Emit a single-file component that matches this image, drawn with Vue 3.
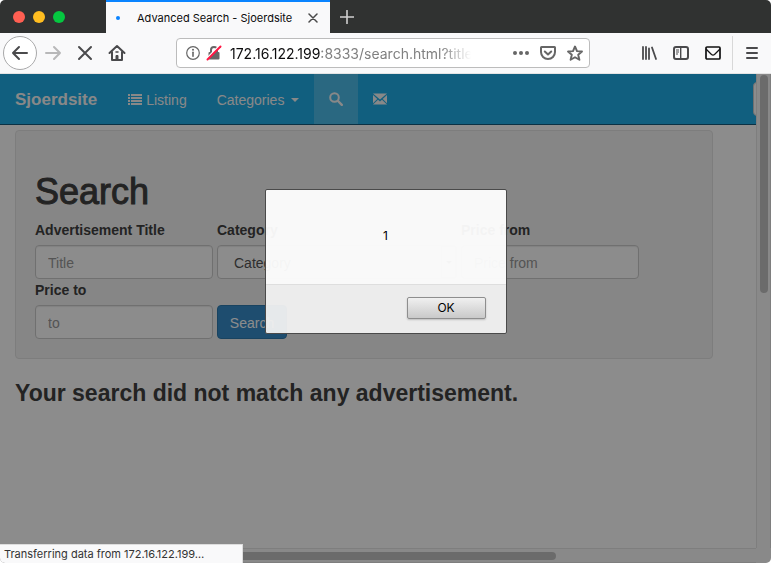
<script setup>
import { ref } from 'vue'

const title = ref('')
const priceFrom = ref('')
const priceTo = ref('')
const query = ref('')
const category = ref('')
const address = '172.16.122.199'
</script>

<template>
  <div class="window">
    <header class="tabbar">
      <div class="lights">
        <button class="light red" aria-label="Close window"></button>
        <button class="light amber" aria-label="Minimise window"></button>
        <button class="light green" aria-label="Zoom window"></button>
      </div>
      <div class="tab">
        <span class="busy"></span>
        <span class="tab-title">Advanced Search - Sjoerdsite</span>
        <button class="plain tab-close" aria-label="Close tab">
          <svg width="10" height="10" viewBox="0 0 10 10"><path d="M1 1l8 8M9 1l-8 8" stroke="#4a4a4a" stroke-width="1.5" stroke-linecap="round" /></svg>
        </button>
      </div>
      <button class="plain new-tab" aria-label="New tab">
        <svg width="14" height="14" viewBox="0 0 14 14"><path d="M7 .5v13M.5 7h13" stroke="#d0d0d0" stroke-width="1.6" stroke-linecap="round" /></svg>
      </button>
    </header>

    <div class="toolbar">
      <button class="plain back" aria-label="Back">
        <svg width="18" height="16" viewBox="0 0 18 16" fill="none" stroke="#4a4a4c" stroke-width="2" stroke-linecap="round" stroke-linejoin="round"><path d="M16 8H2M8 2L2 8l6 6" /></svg>
      </button>
      <button class="plain tool" aria-label="Forward">
        <svg width="18" height="16" viewBox="0 0 18 16" fill="none" stroke="#b8b8b9" stroke-width="2" stroke-linecap="round" stroke-linejoin="round"><path d="M2 8h14M10 2l6 6-6 6" /></svg>
      </button>
      <button class="plain tool" aria-label="Stop">
        <svg width="16" height="16" viewBox="0 0 16 16" fill="none" stroke="#4a4a4c" stroke-width="2" stroke-linecap="round"><path d="M2 2l12 12M14 2L2 14" /></svg>
      </button>
      <button class="plain tool" aria-label="Home">
        <svg width="18" height="18" viewBox="0 0 18 18" fill="none" stroke="#4a4a4c" stroke-width="2" stroke-linecap="round" stroke-linejoin="round"><path d="M1.500 9L9 2l7.500 7M4 8v8h10V8" /><path d="M8 15.500v-4h2v4z" fill="#4a4a4c" stroke-width="1" /><path d="M8 8h2" stroke-width="1.500" /></svg>
      </button>
      <div class="urlbar">
        <button class="plain" aria-label="Site information">
          <svg width="14" height="14" viewBox="0 0 14 14" fill="none" stroke="#666"><circle cx="7" cy="7" r="6.300" stroke-width="1.200" /><path d="M7 6.300v4" stroke-width="1.600" stroke-linecap="round" /><circle cx="7" cy="3.800" r="1" fill="#666" stroke="none" /></svg>
        </button>
        <button class="plain" aria-label="Connection is not secure">
          <svg width="16" height="16" viewBox="0 0 16 16" fill="none"><path d="M5 8V5a3 3 0 0 1 6 0v3" stroke="#666" stroke-width="2" /><rect x="2.500" y="7" width="11" height="7.500" rx="1" fill="#666" /><path d="M1.200 13.500L13.500 1.200" stroke="#fff" stroke-width="2.400" /><path d="M1.500 14.500l13-13" stroke="#ff1744" stroke-width="2" stroke-linecap="round" /></svg>
        </button>
        <div class="address">{{ address }}<span class="path">:8333/search.html?title=</span></div>
        <button class="plain" aria-label="Page actions">
          <svg width="16" height="4" viewBox="0 0 16 4" fill="#666"><circle cx="2" cy="2" r="2" /><circle cx="8" cy="2" r="2" /><circle cx="14" cy="2" r="2" /></svg>
        </button>
        <button class="plain" aria-label="Save to Pocket">
          <svg width="16" height="15" viewBox="0 0 16 15" fill="none" stroke="#666" stroke-width="2" stroke-linecap="round" stroke-linejoin="round"><path d="M1.500 1h13q.5 0 .5.500V6a7 7 0 0 1-14 0V1.500q0-.5.500-.5z" /><path d="M4.800 5.500L8 8.500l3.200-3" /></svg>
        </button>
        <button class="plain" aria-label="Bookmark this page">
          <svg width="16" height="17" viewBox="0 0 16 17" fill="none" stroke="#666" stroke-width="1.900" stroke-linejoin="round"><path d="M8 1.500l2 4.600 5 .4-3.800 3.300 1.200 5L8 12.200l-4.400 2.600 1.200-5L1 6.500l5-.4z" /></svg>
        </button>
      </div>
      <div class="extras">
        <button class="plain" aria-label="Library">
          <svg width="16" height="14" viewBox="0 0 16 14" stroke="#4a4a4c" stroke-width="1.800" stroke-linecap="round" fill="none"><path d="M2 1v12M5 1v12M8 2.500V13M11 1.500L15 13" /></svg>
        </button>
        <button class="plain" aria-label="Sidebars">
          <svg width="16" height="14" viewBox="0 0 16 14" stroke="#4a4a4c" fill="none"><rect x="1" y="1" width="14" height="12" rx="2" stroke-width="2" /><path d="M7.700 1v12" stroke-width="1.400" /><path d="M3 4h3M3 6h3M3 8h2" stroke-width="1" /></svg>
        </button>
        <button class="plain" aria-label="Mail">
          <svg width="16" height="14" viewBox="0 0 16 14" stroke="#111" fill="none"><rect x="1" y="1" width="14" height="12" rx="1" stroke-width="1.700" /><path d="M1 3l5.500 5.500q1.500 1.200 3 0L15 3" stroke-width="1.300" /></svg>
        </button>
        <button class="plain menu" aria-label="Menu">
          <svg width="12" height="12" viewBox="0 0 12 12" stroke="#4a4a4c" stroke-width="2" stroke-linecap="round"><path d="M1 1h10M1 6h10M1 11h10" /></svg>
        </button>
      </div>
    </div>

    <div class="viewport">
      <div class="page">
        <nav class="navbar">
          <a class="brand" href="#">Sjoerdsite</a>
          <a href="#">
            <svg width="14" height="14" viewBox="0 0 14 14" fill="currentColor"><path d="M0 1h2v2H0zM3 1h11v2H3zM0 4h2v2H0zM3 4h11v2H3zM0 7h2v2H0zM3 7h11v2H3zM0 10h2v2H0zM3 10h11v2H3z" /></svg>
            Listing
          </a>
          <a class="dropdown" href="#">Categories <span class="caret"></span></a>
          <a class="icon active" href="#" aria-label="Search">
            <svg width="14" height="14" viewBox="0 0 14 14" fill="none" stroke="currentColor"><circle cx="5.500" cy="5.500" r="4.300" stroke-width="2" /><path d="M9 9l3.800 3.800" stroke-width="2.400" stroke-linecap="round" /></svg>
          </a>
          <a class="icon" href="#" aria-label="Contact">
            <svg width="14" height="12" viewBox="0 0 14 12" fill="currentColor"><path d="M0 .5h14L7 6.500zM0 2l4.300 4L0 10.200zM14 2L9.700 6l4.300 4.200zM0 11.500l5-4.800 2 1.800 2-1.800 5 4.800z" /></svg>
          </a>
          <input v-model="query" class="quick" type="text" aria-label="Quick search" />
        </nav>

        <main>
          <form class="well" @submit.prevent>
            <h1>Search</h1>
            <div class="fields">
              <div class="group">
                <label for="title">Advertisement Title</label>
                <input id="title" v-model="title" type="text" placeholder="Title" />
              </div>
              <div class="group wide">
                <label for="category">Category</label>
                <div class="picker">
                  <select id="category" v-model="category">
                    <option value="">Category</option>
                  </select>
                  <span class="arrow"><span class="caret"></span></span>
                </div>
              </div>
              <div class="group">
                <label for="from">Price from</label>
                <input id="from" v-model="priceFrom" type="text" placeholder="Price from" />
              </div>
              <div class="group">
                <label for="to">Price to</label>
                <input id="to" v-model="priceTo" type="text" placeholder="to" />
              </div>
              <button class="submit" type="submit">Search</button>
            </div>
          </form>
          <h3>Your search did not match any advertisement.</h3>
        </main>
      </div>
      <div class="track vertical"><div class="thumb"></div></div>
      <div class="track horizontal"><div class="thumb"></div></div>
      <div class="corner"></div>

      <div class="backdrop">
        <div class="dialog" role="alertdialog" aria-labelledby="message">
          <p id="message">1</p>
          <div class="actions"><button class="ok" type="button">OK</button></div>
        </div>
      </div>
      <div class="status">Transferring data from {{ address }}…</div>
    </div>
  </div>
</template>

<style>
body { margin: 0; background: #fff; }
</style>

<style scoped>
* { box-sizing: border-box; }
.window {
  display: flex;
  flex-direction: column;
  height: 100vh;
  overflow: hidden;
  border-radius: 5px;
  font-family: Inter, sans-serif;
}
.plain {
  display: flex;
  align-items: center;
  justify-content: center;
  padding: 0;
  border: 0;
  background: none;
}
.tabbar { display: flex; flex: none; height: 33px; background: #303231; }
.lights { display: flex; align-items: center; gap: 8px; width: 106px; padding-left: 13px; }
.light { width: 12px; height: 12px; padding: 0; border: 0; border-radius: 50%; }
.red { background: #ff5f52; }
.amber { background: #ffbd20; }
.green { background: #05c740; }
.tab {
  display: flex;
  align-items: center;
  width: 224px;
  padding: 0 12px 0 10px;
  border-top: 2px solid #0a84ff;
  background: #f9f9fa;
}
.busy { width: 4px; height: 4px; border-radius: 50%; background: #0a84ff; }
.tab-title { flex: 1; padding-left: 17px; font-size: 11px; color: #0c0c0d; white-space: nowrap; }
.new-tab { width: 34px; }
.toolbar {
  display: flex;
  align-items: center;
  flex: none;
  height: 41px;
  padding-left: 3px;
  border-bottom: 1px solid #e4e4e4;
  background: #f9f9fa;
}
.back { flex: none; width: 34px; height: 34px; border: 1px solid #a9a9aa; border-radius: 50%; background: #fff; }
.tool { flex: none; width: 32px; height: 32px; }
.urlbar {
  display: flex;
  align-items: center;
  flex: 1;
  gap: 12px;
  height: 30px;
  min-width: 0;
  margin-left: 43px;
  padding: 0 6px 0 9px;
  border: 1px solid #bcbcbc;
  border-radius: 4px;
  background: #fff;
}
.urlbar button + button { margin-left: -1px; }
.urlbar button:nth-child(2) { margin-left: -6px; }
.address {
  flex: 1;
  min-width: 0;
  margin: 0 10px 0 -4px;
  overflow: hidden;
  padding-top: 1px;
  font-size: 14px;
  color: #0c0c0d;
  white-space: nowrap;
  mask-image: linear-gradient(to left, transparent 20px, #000 50px);
}
.path { color: #808080; }
.extras { display: flex; align-items: center; gap: 16px; padding-left: 51px; }
.menu { width: 39px; height: 34px; margin-left: -5px; border-left: 1px solid #d8d8d8; }

.viewport {
  position: relative;
  display: grid;
  grid-template: minmax(0, 1fr) 15px / minmax(0, 1fr) 15px;
  flex: 1;
  min-height: 0;
}
.page {
  overflow: hidden;
  background: #fff;
  font: 14px/20px "Liberation Sans", sans-serif;
  color: #404040;
}
.navbar {
  display: flex;
  height: 51px;
  overflow: hidden;
  border-bottom: 1px solid #145a7c;
  background: #1faee8;
}
.navbar a {
  display: flex;
  flex: none;
  align-items: center;
  gap: 4px;
  padding: 2px 15px 0;
  color: #f8f8f8;
  text-decoration: none;
}
.navbar .brand { padding-right: 16px; font-size: 17px; font-weight: 700; }
.navbar .dropdown { gap: 7px; }
.navbar .icon { padding-top: 0; }
.navbar .active { background: #4dbdec; }
.caret { border: 4px solid transparent; border-top-color: currentColor; border-bottom: 0; }
.quick {
  flex: none;
  width: 170px;
  height: 34px;
  margin: 8px 0 0 auto;
  margin-right: -167px;
  border: 1px solid #ccc;
  border-radius: 4px;
}
main { padding: 5px 43px 0 15px; }
.well { padding: 19px; border: 1px solid #e3e3e3; border-radius: 4px; background: #f5f5f5; }
h1 { margin: 22px 0 8px; font-size: 36px; font-weight: 400; line-height: 40px; -webkit-text-stroke: 1px; }
h3 { margin: 21px 0 10px; font-size: 23px; line-height: 26px; white-space: nowrap; }
.fields { display: flex; flex-wrap: wrap; align-items: flex-end; gap: 1px 4px; }
.group { display: flex; flex-direction: column; gap: 5px; width: 178px; }
.wide { width: 240px; }
label { font-weight: 700; }
.group input, select {
  display: block;
  width: 100%;
  height: 34px;
  padding: 2px 12px 0;
  border: 1px solid #ccc;
  border-radius: 4px;
  background: #fff;
  box-shadow: inset 0 1px 1px rgba(0, 0, 0, .08);
  font: inherit;
  color: #555;
}
.picker { position: relative; }
.picker select { padding-left: 16px; appearance: none; }
.arrow {
  position: absolute;
  inset: 1px 1px 1px auto;
  display: flex;
  align-items: center;
  justify-content: center;
  width: 15px;
  border: 1px solid #ccc;
  color: #555;
  pointer-events: none;
}
.arrow .caret { border-width: 3px; border-bottom: 0; }
input::placeholder { color: #999; opacity: 1; }
.submit {
  width: 70px;
  height: 34px;
  padding: 1px 0 0;
  border: 1px solid #2e7bb0;
  border-radius: 4px;
  background: #388dca;
  font: inherit;
  color: #fff;
}
.track { display: flex; background: #fafafa; }
.vertical { padding: 1px 2px 0 3px; border-left: 1px solid #e6e6e6; border-right: 1px solid #e6e6e6; }
.vertical .thumb { width: 8px; height: 46%; }
.horizontal { padding: 3px 0; border-top: 1px solid #e6e6e6; border-bottom: 1px solid #e6e6e6; }
.horizontal .thumb { flex: none; width: 73%; height: 8px; margin-left: 4px; }
.thumb { border-radius: 4px; background: #c4c4c4; }
.corner { background: #fafafa; }
.backdrop {
  position: absolute;
  inset: 0;
  display: flex;
  align-items: flex-start;
  justify-content: center;
  padding-top: 115px;
  background: rgba(0, 0, 0, .45);
}
.dialog {
  width: 242px;
  border: 1px solid #4a4a4a;
  border-radius: 2px;
  background: rgba(255, 255, 255, .95);
  color: #000;
}
.dialog p { margin: 0; padding: 38px 0 40px; font-size: 12px; line-height: 16px; text-align: center; }
.actions {
  display: flex;
  justify-content: flex-end;
  height: 49px;
  padding: 12px 20px;
  border-top: 1px solid #dedede;
  background: rgba(0, 0, 0, .05);
}
.ok {
  width: 79px;
  height: 22px;
  padding: 0;
  border: 1px solid #8e8e8e;
  border-radius: 2px;
  background: linear-gradient(#f0f0f0, #c9c9c9);
  box-shadow: 0 1px 2px rgba(0, 0, 0, .2);
  font: 12px/18px Inter, sans-serif;
  color: #000;
}
.status {
  position: absolute;
  bottom: 0;
  left: 0;
  width: 243px;
  padding: 1px 4px 0;
  border-top: 1px solid #ddd;
  border-right: 1px solid #ddd;
  background: #f9f9fa;
  font-size: 11px;
  line-height: 17px;
  color: #333;
  white-space: nowrap;
}
</style>
